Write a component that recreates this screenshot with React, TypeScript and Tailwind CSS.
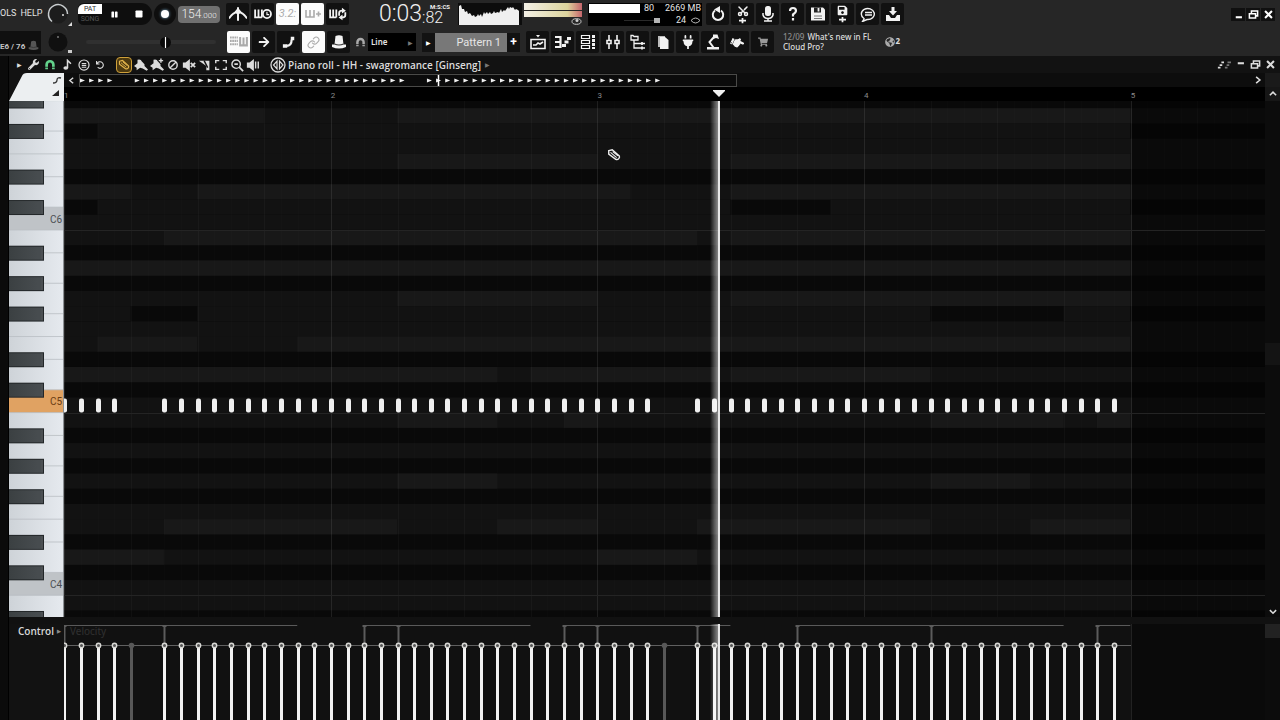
import { clsx } from 'clsx'
import type { FC, ReactNode } from 'react'
import {
  FaArrowRight,
  FaGlobeAmericas,
  FaHandPointRight,
  FaPause,
  FaPlug,
  FaSave,
  FaShoppingCart,
  FaStop,
  FaUndo,
  FaWrench,
} from 'react-icons/fa'
import { LuLink, LuScissors } from 'react-icons/lu'

const STEP = 16.66
const ROW = 15.22
const FIRST_ROW = -8
const STEPS = Array.from({ length: 64 }, (_, i) => i)
const ROWS = Array.from({ length: 35 }, (_, i) => i)
const SILENT = [4, 5, 36, 37]
const MUTED = [4, 36]
const HITS = STEPS.filter((i) => !SILENT.includes(i))
const PLAYHEAD = 655
const PATTERN_END = 1067

// the topmost visible key is G#
const NAMES = ['G#', 'G', 'F#', 'F', 'E', 'D#', 'D', 'C#', 'C', 'B', 'A#', 'A']
const nameOf = (row: number) => NAMES[row % 12]
const isBlack = (row: number) => nameOf(row).includes('#')
const topOf = (row: number) => FIRST_ROW + row * ROW
const xOf = (step: number) => Math.round(step * STEP + 0.3)

// [row, first step, last step, tone]
type Ghost = [number, number, number, 'light' | 'plain']
const GHOSTS: Ghost[] = [
  [1, 0, 12, 'light'],
  [1, 20, 64, 'light'],
  [2, 2, 64, 'plain'],
  [4, 20, 32, 'light'],
  [4, 40, 64, 'light'],
  [6, 0, 4, 'light'],
  [6, 8, 34, 'light'],
  [6, 40, 64, 'light'],
  [7, 2, 40, 'plain'],
  [7, 46, 64, 'plain'],
  [9, 6, 38, 'light'],
  [9, 40, 64, 'light'],
  [11, 0, 64, 'light'],
  [13, 20, 32, 'light'],
  [13, 40, 64, 'light'],
  [14, 0, 4, 'plain'],
  [14, 8, 52, 'plain'],
  [14, 60, 64, 'plain'],
  [16, 2, 8, 'light'],
  [16, 14, 64, 'light'],
  [18, 0, 26, 'light'],
  [18, 28, 39, 'light'],
  [18, 40, 52, 'light'],
  [21, 20, 26, 'light'],
  [21, 30, 32, 'light'],
  [21, 52, 60, 'light'],
  [21, 62, 64, 'light'],
  [25, 20, 26, 'light'],
  [25, 52, 58, 'light'],
  [28, 6, 20, 'light'],
  [28, 26, 32, 'light'],
  [28, 38, 52, 'light'],
  [28, 58, 64, 'light'],
  [30, 0, 6, 'light'],
  [30, 32, 38, 'light'],
]
const TONES = { light: '#181818', plain: '#121212' }

type IconProps = { children: ReactNode; size?: number }

const Icon: FC<IconProps> = ({ children, size = 16 }) => (
  <svg
    width={size}
    height={size}
    viewBox="0 0 16 16"
    fill="none"
    stroke="currentColor"
    strokeWidth="1.6"
    aria-hidden="true"
  >
    {children}
  </svg>
)

const Magnet: FC<{ size?: number }> = ({ size = 13 }) => (
  <Icon size={size}>
    <path d="M3.5 13.500V7.500a4.500 4.500 0 0 1 9 0v6" strokeWidth="3.600" />
    <path d="M1 11h5M10 11h5" stroke="#111" strokeWidth="1" />
  </Icon>
)

const Hat: FC<{ size?: number }> = ({ size = 16 }) => (
  <Icon size={size}>
    <path
      d="M4.500 2q3.500-1.500 7 0l1 8.500H15V13q-7 3-14 0v-2.500h2.500z"
      fill="currentColor"
      stroke="none"
    />
    <path d="M3.500 10q4.500 2 9 0" stroke="#333" strokeWidth="1.200" />
  </Icon>
)

const Speaker: FC<{ children?: ReactNode }> = ({ children }) => (
  <Icon size={14}>
    <path d="M1 5h3l5-4v14l-5-4H1z" fill="currentColor" stroke="none" />
    {children}
  </Icon>
)

const Brush: FC<{ children?: ReactNode }> = ({ children }) => (
  <Icon size={14}>
    <path
      d="M4 2q4-1 5 2l3 3 0 2 4 4-1.500 1.500L10 12l-3-1-4 3 0-3-3-2 4-3z"
      fill="currentColor"
      stroke="none"
    />
    {children}
  </Icon>
)

const Pencil: FC<{ size?: number }> = ({ size = 14 }) => (
  <Icon size={size}>
    <path d="M2 3l4-1 8 7c1 2-1 5-4 4L2 7z" />
    <path d="M4 5l7 6M6.500 4l6 5" strokeWidth="1.2" />
  </Icon>
)

const Restore: FC = () => (
  <Icon size={11}>
    <path d="M2 7h9v6H2zM5 6V3h9v7h-3" strokeWidth="2.200" />
  </Icon>
)

const Close: FC = () => (
  <Icon size={11}>
    <path d="M3 3l10 10M13 3L3 13" strokeWidth="3" />
  </Icon>
)

const Minimize: FC = () => (
  <Icon size={11}>
    <path d="M4 12h9" strokeWidth="3" />
  </Icon>
)

type ToolProps = { label: string; on?: boolean; dim?: boolean; children: ReactNode }

const Tool: FC<ToolProps> = ({ label, on, dim, children }) => (
  <button
    type="button"
    aria-label={label}
    className={clsx(
      'flex h-[22px] w-[23px] shrink-0 items-center justify-center rounded-xs',
      on ? 'bg-[#fcfcfc] text-[#aaaaaa]' : 'bg-[#111111]',
      !on && (dim ? 'text-[#9a9a9a]' : 'text-[#f2f2f2]'),
    )}
  >
    {children}
  </button>
)

const Knob: FC<{ label: string; bright?: boolean }> = ({ label, bright }) => (
  <button
    type="button"
    aria-label={label}
    className="flex h-7 w-8 shrink-0 items-center justify-center"
  >
    <svg width="28" height="26" viewBox="0 0 28 26" aria-hidden="true">
      <circle cx="12" cy="13" r="9.500" fill={bright ? '#1c1c1c' : '#101010'} />
      {bright ? (
        <>
          <path
            d="M6 20.500A9.500 9.500 0 1 1 21.500 13"
            fill="none"
            stroke="#c9cdcf"
            strokeWidth="1.500"
          />
          <circle cx="17" cy="14" r="1" fill="#ddd" />
          <path d="M26 21v4h-4z" fill="#ddd" />
        </>
      ) : (
        <>
          <circle cx="12" cy="8" r="1" fill="#777" />
          <path d="M22 21h4v3h-4z" fill="#ccc" />
        </>
      )}
    </svg>
  </button>
)

const Spectrum: FC = () => (
  <svg
    width="64"
    height="22"
    viewBox="0 0 64 22"
    className="shrink-0 bg-[#0c0c0c]"
    aria-hidden="true"
  >
    <path
      d="M1 22V3l2-1 1 4 2 0 1 3 2-1 1 3 2-1 2 3 2-1 1 2 2-1 1-2 1 2 2-2 1 3 2-5 1 2 2-2 1 2 2-2 1 2 2-1 1-2 1 2 3-1 1 1 2-4 1 3 2-2 1 1 3-4 1 2 1-2 2 1 1-1 2 3 1-1 2 1 1 1V22z"
      fill="#f0f0f0"
    />
  </svg>
)

const Meter: FC = () => (
  <div className="mx-[2px] flex h-[22px] w-[58px] shrink-0 flex-col gap-px">
    <div className="h-[7px] bg-linear-to-r from-[#f4f0e6] via-[#dcd49c] via-75% to-[#c4656c]" />
    <div className="h-[7px] bg-linear-to-r from-[#f4f0e6] via-[#dcd49c] via-75% to-[#c4656c]" />
    <div className="flex justify-end text-[#cccccc]">
      <svg width="11" height="7" viewBox="0 0 11 7" aria-hidden="true">
        <ellipse cx="5.500" cy="3.500" rx="4.500" ry="2.800" fill="none" stroke="currentColor" />
        <circle cx="6" cy="2.500" r="1.500" fill="currentColor" />
      </svg>
    </div>
  </div>
)

const SystemPanel: FC = () => (
  <div className="mx-1 flex h-[23px] w-[114px] shrink-0 flex-col justify-between bg-black px-px text-[9px] leading-[11px] text-[#e4e4e4]">
    <div className="flex items-center gap-1">
      <span className="h-[9px] w-[51px] bg-white" />
      <span>80</span>
      <span className="ml-auto">2669 MB</span>
    </div>
    <div className="flex items-center justify-end gap-1">
      <span className="mr-3 flex w-9 items-center">
        <span className="h-px flex-1 bg-[#2a2a2a]" />
        <span className="h-[5px] w-[6px] bg-[#b5b5b5]" />
      </span>
      <span>24</span>
      <svg width="11" height="7" viewBox="0 0 11 7" aria-hidden="true">
        <path d="M1 3.500q4.500-5 9 0-4.500 5-9 0z" fill="none" stroke="#bbb" />
      </svg>
    </div>
  </div>
)

const TransportRow: FC = () => (
  <div className="flex h-7 items-center">
    <nav className="flex w-11 shrink-0 gap-1 text-[9px] text-[#e2e2e2]">
      <button type="button">OLS</button>
      <button type="button">HELP</button>
    </nav>
    <Knob label="Main volume" bright />
    <div className="ml-[2px] flex h-[22px] w-[74px] shrink-0 items-center rounded-l-md rounded-r-xl bg-[#0e0e0e]">
      <div className="flex w-6 flex-col text-center text-[7px] leading-[10px]">
        <button type="button" className="rounded-tl-md bg-white text-[#333333]">
          PAT
        </button>
        <button type="button" className="text-[#555555]">
          SONG
        </button>
      </div>
      <button type="button" aria-label="Pause" className="ml-[9px]">
        <FaPause size={7} color="#fff" />
      </button>
      <button type="button" aria-label="Stop" className="ml-[17px]">
        <FaStop size={8} color="#fff" />
      </button>
    </div>
    <button
      type="button"
      aria-label="Record"
      className="mx-[2px] flex size-[22px] shrink-0 items-center justify-center rounded-full bg-[#0e0e0e]"
    >
      <span className="size-2 rounded-full bg-white shadow-[0_0_3px_#88bbdd]" />
    </button>
    <div className="mr-[6px] flex h-[17px] w-[42px] shrink-0 items-baseline justify-center rounded-sm bg-[#707070] text-xs leading-[17px] font-light text-[#efefef]">
      154<span className="text-[8px]">.000</span>
    </div>
    <div className="flex gap-[2px]">
      <Tool label="Metronome">
        <Icon size={18}>
          <path d="M0 12q3-5 8-6 5 1 8 6" />
          <path d="M8 2v12" strokeWidth="1.800" />
          <path d="M8 2.500L11 6 8 9 5 6z" fill="currentColor" stroke="none" />
        </Icon>
      </Tool>
      <Tool label="Wait for input">
        <Icon size={18}>
          <path d="M1 4v7h6M4 4v7M7 4v7" />
          <circle cx="11.500" cy="8" r="3.600" />
          <path d="M11.500 6v2.500h2" strokeWidth="1" />
        </Icon>
      </Tool>
      <Tool label="Countdown" on>
        <span className="text-[11px] italic">3.2:</span>
      </Tool>
      <Tool label="Overdub" on>
        <Icon>
          <path d="M1 4v7h8V4M5 4v7M11 8h5M13.500 5.500v5" />
        </Icon>
      </Tool>
      <Tool label="Loop recording">
        <Icon size={18}>
          <path d="M1 4v7h5.500M3.700 4v7M6.500 4v7" />
          <path d="M9 9.500V7q0-2 3-2M14.500 6.500V9q0 2-3 2" />
          <path
            d="M11.500 2.500L15 5l-3.500 2.500zM12 8.500L8.500 11l3.500 2.500z"
            fill="currentColor"
            stroke="none"
          />
        </Icon>
      </Tool>
    </div>
    <div className="flex w-[109px] shrink-0 justify-end pr-2 text-[#f1f1f1]">
      <span className="text-[23px] leading-7 font-light">0:03</span>
      <span className="flex flex-col pt-[3px]">
        <span className="pl-2 text-[6px] leading-[7px] font-bold">M:S:CS</span>
        <span className="text-base leading-4 font-light">:82</span>
      </span>
    </div>
    <Spectrum />
    <Meter />
    <SystemPanel />
    <div className="flex gap-[2px]">
      <Tool label="Undo">
        <Icon>
          <path d="M5 4.500a5.200 5.200 0 1 0 6 0" strokeWidth="2" />
          <path d="M10 0L4 3.500 10 7z" fill="currentColor" stroke="none" />
        </Icon>
      </Tool>
      <Tool label="Cut">
        <span className="flex flex-col items-center">
          <LuScissors size={12} className="-rotate-90" strokeWidth={3} />
          <Icon size={7}>
            <path d="M0 8h16M8 2v12" strokeWidth="4" />
          </Icon>
        </span>
      </Tool>
      <Tool label="Record audio">
        <Icon>
          <rect x="5" y="0" width="6" height="10" rx="2.500" fill="currentColor" stroke="none" />
          <path d="M3 7v2q1 3.500 5 3.500T13 9V7M8 12v3.500M4 15h8" strokeWidth="1.500" />
        </Icon>
      </Tool>
      <Tool label="Help">
        <Icon>
          <path d="M5 5q0-3 3-3t3 3q0 1.500-3 3.500v2M8 12v2.500" strokeWidth="2.200" />
        </Icon>
      </Tool>
      <Tool label="Save">
        <Icon>
          <path d="M1 1.500h12l2 2v11H1z" fill="currentColor" stroke="none" />
          <path d="M4 1.500h7v5H4z" fill="#222" stroke="none" />
          <path d="M8.500 2v3.500" stroke="#eee" strokeWidth="1.800" />
          <path d="M4 10h8M4 12.500h8" stroke="#777" strokeWidth="1" />
        </Icon>
      </Tool>
      <Tool label="Save new version">
        <span className="flex flex-col items-center">
          <FaSave size={11} />
          <Icon size={7}>
            <path d="M0 8h16M8 2v12" strokeWidth="4" />
          </Icon>
        </span>
      </Tool>
      <Tool label="Messages">
        <Icon>
          <path d="M4 13l-1.500 2.500L7 13.500a6.500 5.500 0 1 0-3-1z" strokeWidth="1.400" />
          <path d="M5 6.500h7M5 9h7" strokeWidth="1.300" />
        </Icon>
      </Tool>
      <Tool label="Export">
        <Icon>
          <path
            d="M6.500 1h3v4H12L8 9.500 4 5h2.500zM1 9h3l2 3h4l2-3h3v6H1z"
            fill="currentColor"
            stroke="none"
          />
        </Icon>
      </Tool>
    </div>
    <div className="mr-[5px] ml-auto flex gap-px text-white">
      {[
        { label: 'Minimize', icon: <Minimize /> },
        { label: 'Restore', icon: <Restore /> },
        { label: 'Close', icon: <Close /> },
      ].map(({ label, icon }) => (
        <button
          key={label}
          type="button"
          aria-label={label}
          className="flex h-[13px] w-[14px] items-center justify-center bg-[#101010]"
        >
          {icon}
        </button>
      ))}
    </div>
  </div>
)

const PatternRow: FC = () => (
  <div className="flex h-7 items-center">
    <div className="mr-[3px] flex h-[23px] w-[41px] shrink-0 items-end justify-between bg-[#101010] pr-[2px] pb-px text-[8px] leading-3 font-bold whitespace-nowrap text-[#c4c4c4]">
      E6 / 76
      <span className="mb-[2px] text-[#555555]">
        <Hat size={11} />
      </span>
    </div>
    <Knob label="Main pitch" />
    <input
      type="range"
      aria-label="Song position"
      defaultValue={62}
      className="mr-[11px] ml-[10px] h-1 w-[130px] shrink-0 appearance-none rounded bg-[#303030] [&::-webkit-slider-thumb]:h-[11px] [&::-webkit-slider-thumb]:w-[11px] [&::-webkit-slider-thumb]:appearance-none [&::-webkit-slider-thumb]:rounded-full [&::-webkit-slider-thumb]:bg-linear-to-r [&::-webkit-slider-thumb]:from-[#0a0a0a] [&::-webkit-slider-thumb]:from-40% [&::-webkit-slider-thumb]:via-white [&::-webkit-slider-thumb]:to-[#0a0a0a] [&::-webkit-slider-thumb]:to-60%"
    />
    <div className="flex gap-[2px]">
      <Tool label="Typing keyboard" on>
        <Icon size={18}>
          <path d="M0 4h7M0 7h7M0 10h7" strokeWidth="1.800" strokeDasharray="1.500 .5" />
          <path d="M9 3.500v7.500h6V3.500M12 4v7" strokeWidth="1.800" />
        </Icon>
      </Tool>
      <Tool label="Step forward">
        <FaArrowRight size={12} />
      </Tool>
      <Tool label="Slide">
        <Icon size={14}>
          <path d="M5 12.500q6 0 6-7" strokeWidth="2.500" />
          <path d="M1 10.500h5v4H1zM10 2h4v4h-4z" fill="currentColor" stroke="none" />
        </Icon>
      </Tool>
      <Tool label="Link controls" on>
        <LuLink size={13} />
      </Tool>
      <Tool label="Hints">
        <Hat />
      </Tool>
    </div>
    <div className="mr-[2px] ml-[5px] flex text-[#aaaaaa]">
      <Magnet size={11} />
    </div>
    <div className="flex h-[18px] w-12 shrink-0 items-center bg-black">
      <select
        aria-label="Snap"
        className="w-9 appearance-none bg-transparent px-[3px] font-['Noto_Sans',sans-serif] text-[8px] font-semibold text-[#e6e6e6]"
      >
        <option>Line</option>
      </select>
      <span className="pl-1 text-[6px] text-[#777777]">▶</span>
    </div>
    <div className="mx-[6px] flex h-[19px] w-[98px] shrink-0 items-center bg-[#121212] text-white">
      <button type="button" aria-label="Pattern menu" className="w-[13px] text-[6px]">
        ▶
      </button>
      <button
        type="button"
        className="h-full flex-1 bg-[#787878] pr-[6px] text-right text-[11px] leading-[19px] text-[#e6e6e6]"
      >
        Pattern 1
      </button>
      <button
        type="button"
        aria-label="Add pattern"
        className="w-[13px] text-xs leading-4 font-bold"
      >
        +
      </button>
    </div>
    <div className="flex gap-[2px]">
      <Tool label="Playlist">
        <Icon>
          <path d="M1 5.500h14v9H1zM3 11h3l2-2 2 1 3-2" />
          <path d="M6 1h4L8 3.500z" fill="currentColor" stroke="none" />
        </Icon>
      </Tool>
      <Tool label="Piano roll">
        <Icon>
          <path d="M0 3h6M0 8h6M0 13h6M5.500 2v12" strokeWidth="2.200" />
          <path d="M7 11.500h4M9.500 8h4M12 4.500h4" strokeWidth="3" />
        </Icon>
      </Tool>
      <Tool label="Channel rack">
        <Icon>
          <path
            d="M1.500 1.500h8v3h-8zM1.500 6.500h8v3h-8zM1.500 11.500h8v3h-8z"
            strokeWidth="1.200"
          />
          <path d="M13.500 1v14" strokeWidth="3" strokeDasharray="3 1" />
        </Icon>
      </Tool>
      <Tool label="Mixer">
        <Icon>
          <path
            d="M4 1v5M4 10v5M12 1v5M12 10v5M2 6.500h4v3H2zM10 6.500h4v3h-4z"
            strokeWidth="1.600"
          />
        </Icon>
      </Tool>
      <Tool label="Browser">
        <Icon>
          <path d="M1 1.500h2l1 1h4V6H1zM4 6v8h5M4 9.500h5" strokeWidth="1.300" />
          <path d="M9 9.500h6M9 14h6M12 8v3M12 12.500v3" strokeWidth="1.700" />
        </Icon>
      </Tool>
      <Tool label="Project files">
        <Icon>
          <path d="M3 2h7v11H3z" fill="#bbb" stroke="none" />
          <path d="M5 3h5l3.500 3v9H5z" fill="currentColor" stroke="none" />
        </Icon>
      </Tool>
      <Tool label="Plugins">
        <FaPlug size={14} />
      </Tool>
      <Tool label="Tools">
        <Icon>
          <path d="M9 3L4.500 8l4 5.500" strokeWidth="2" />
          <path
            d="M8 .5h4.500L14 5l-3-1-3 1zM2 13h12v2.500H2z"
            fill="currentColor"
            stroke="none"
          />
        </Icon>
      </Tool>
      <Tool label="Touch">
        <FaHandPointRight size={13} className="rotate-[25deg]" />
      </Tool>
      <Tool label="Shop" dim>
        <FaShoppingCart size={10} />
      </Tool>
    </div>
    <a
      href="#news"
      className="ml-1 flex h-6 w-[127px] shrink-0 items-center justify-between px-[5px] font-['Noto_Sans',sans-serif] text-[8px] leading-[10px] font-medium text-[#dddddd]"
    >
      <span className="flex flex-col">
        <span>
          <span className="pr-px text-[#8b8b8b]">12/09</span> What's new in FL
        </span>
        <span>Cloud Pro?</span>
      </span>
      <span className="flex items-start text-[8px] leading-none font-bold">
        <FaGlobeAmericas size={10} color="#aaa" />2
      </span>
    </a>
  </div>
)

const TitleBar: FC = () => (
  <div className="flex h-[17px] items-center text-[#dcdcdc]">
    <div className="flex w-[107px] shrink-0 items-center justify-between pr-3 pl-2">
      <button type="button" aria-label="Piano roll menu" className="text-[6px]">
        ▶
      </button>
      <button type="button" aria-label="Tools">
        <FaWrench size={11} />
      </button>
      <button type="button" aria-label="Snap" className="text-[#63d38c]">
        <Magnet size={12} />
      </button>
      <button type="button" aria-label="Stamp">
        <Icon size={11}>
          <path d="M8 13V2l5 5" strokeWidth="2.200" />
          <ellipse cx="5.500" cy="13" rx="3.500" ry="2.600" fill="currentColor" stroke="none" />
        </Icon>
      </button>
      <button type="button" aria-label="Target">
        <Icon size={12}>
          <circle cx="8" cy="8" r="6.700" />
          <path d="M5 6h6M5 8.500h6M5 11h6" strokeWidth="1.500" />
        </Icon>
      </button>
      <button type="button" aria-label="Undo">
        <FaUndo size={8} />
      </button>
    </div>
    <div className="flex items-center gap-[2px]">
      <button
        type="button"
        aria-label="Draw"
        className="flex size-4 items-center justify-center rounded-sm border border-[#d0a13a] bg-[#4d3a10] text-[#e4b54c]"
      >
        <Pencil size={12} />
      </button>
      <button type="button" aria-label="Paint">
        <Brush />
      </button>
      <button type="button" aria-label="Paint sequence">
        <Brush>
          <path d="M10 3h5M12.500 .5v5" />
        </Brush>
      </button>
      <button type="button" aria-label="Delete">
        <Icon size={14}>
          <circle cx="8" cy="8" r="4.800" />
          <path d="M4.500 11.500l7-7" />
        </Icon>
      </button>
      <button type="button" aria-label="Mute">
        <Speaker>
          <path d="M10 5.500l5 5M15 5.500l-5 5" strokeWidth="2" />
        </Speaker>
      </button>
      <button type="button" aria-label="Slice">
        <Icon size={14}>
          <path d="M1 3h12v11H9.500V9z" fill="currentColor" stroke="none" />
          <path d="M7 3l4 8" stroke="#111" />
        </Icon>
      </button>
      <button type="button" aria-label="Select">
        <Icon size={14}>
          <path d="M2 6V3h4M10 3h4v3M14 10v3h-4M6 13H2v-3" />
        </Icon>
      </button>
      <button type="button" aria-label="Zoom">
        <Icon size={14}>
          <circle cx="7" cy="7" r="4.800" />
          <path d="M10.500 10.500L15 15M5 7h4" strokeWidth="2" />
        </Icon>
      </button>
      <button type="button" aria-label="Playback">
        <Speaker>
          <path d="M11 4v8M14 4v8" />
        </Speaker>
      </button>
    </div>
    <div className="ml-[10px] flex items-center gap-[2px]">
      <Icon size={16}>
        <circle cx="8" cy="8" r="7" strokeWidth="1.300" />
        <path d="M7 4v8L3.500 8zM9.500 4v8L13 8z" strokeWidth="1.200" />
      </Icon>
      <h1 className="font-['Open_Sans','Noto_Sans',sans-serif] text-[10px] leading-4 font-semibold whitespace-nowrap">
        Piano roll - HH - swagromance [Ginseng]
      </h1>
      <span className="pl-[2px] text-[6px] text-[#777777]">▶</span>
    </div>
    <div className="mr-1 ml-auto flex items-center gap-1">
      <button type="button" aria-label="Layout">
        <Icon size={14}>
          <path d="M5 5h3M3 8h3M1 11h3" strokeWidth="2" />
          <path d="M12 5h4M11 8h3M9 11h3" stroke="#777" strokeWidth="2" />
        </Icon>
      </button>
      <button type="button" aria-label="Minimize piano roll" className="pb-2">
        <Minimize />
      </button>
      <button type="button" aria-label="Restore piano roll">
        <Restore />
      </button>
      <button type="button" aria-label="Close piano roll">
        <Close />
      </button>
    </div>
  </div>
)

const Overview: FC = () => (
  <div className="flex items-center bg-[#0d0d0d] text-[#dddddd]">
    <button type="button" aria-label="Scroll left" className="flex w-[15px] justify-center">
      <Icon size={9}>
        <path d="M11 3L5 8l6 5" strokeWidth="2.500" />
      </Icon>
    </button>
    <svg width="658" height="13" aria-hidden="true">
      <rect x=".5" y=".5" width="657" height="12" fill="#0b0b0b" stroke="#4a4a48" />
      {HITS.map((i) => {
        const x = 1 + i * 9.13
        return <path key={i} d={`M${x} 4.500l5 2-5 2z`} fill="#f2f2f2" />
      })}
      <path d="M359.500 1v11" stroke="#fff" strokeWidth="1.500" />
    </svg>
    <button
      type="button"
      aria-label="Scroll right"
      className="ml-auto flex w-[15px] justify-center"
    >
      <Icon size={10}>
        <path d="M5 3l6 5-6 5" strokeWidth="2.500" />
      </Icon>
    </button>
  </div>
)

const Ruler: FC = () => (
  <svg className="h-full w-full bg-black" aria-hidden="true">
    {[0, 1, 2, 3, 4].map((bar) => (
      <text key={bar} x={bar * 266.7} y="11" fontSize="8" fill="#8a8a8a">
        {bar + 1}
      </text>
    ))}
    <path d={`M${PLAYHEAD - 6} 3h12v1l-6 6-6-6z`} fill="#f0f0f0" />
  </svg>
)

const Keyboard: FC = () => (
  <svg className="h-full w-full bg-[#dde2e7]" role="img" aria-label="Keyboard">
    <defs>
      <linearGradient id="ivory">
        <stop offset="0" stopColor="#ced3d8" />
        <stop offset="1" stopColor="#e6eaef" />
      </linearGradient>
      <linearGradient id="ebony">
        <stop offset="0" stopColor="#3b4042" />
        <stop offset=".9" stopColor="#474c4f" />
      </linearGradient>
    </defs>
    <rect width="100%" height="100%" fill="url(#ivory)" />
    {ROWS.filter((row) => nameOf(row) === 'C').map((row, i) => (
      <g key={row}>
        <rect
          y={topOf(row) - ROW / 2}
          width="55"
          height={ROW * 1.5}
          fill={i === 1 ? '#e0a262' : '#bfc3c7'}
        />
        <text x="41" y={topOf(row) + 8} fontSize="10" fill={i === 1 ? '#6b3d14' : '#4b4f53'}>
          C{6 - i}
        </text>
      </g>
    ))}
    {ROWS.map((row) => (
      <g key={row}>
        {isBlack(row) && (
          <path d={`M34 ${topOf(row) + ROW / 2}h21`} stroke="#b9bec3" strokeWidth=".8" />
        )}
        {(nameOf(row) === 'F' || nameOf(row) === 'C') && (
          <path d={`M0 ${topOf(row + 1)}h55`} stroke="#b9bec3" strokeWidth=".8" />
        )}
        {isBlack(row) && (
          <>
            <rect y={topOf(row) + 0.5} width="35" height="15" fill="#222628" />
            <rect y={topOf(row) + 1.5} width="32" height="13" fill="url(#ebony)" />
            <path d={`M33 ${topOf(row) + 1.5}v13`} stroke="#767b7e" />
          </>
        )}
      </g>
    ))}
    <path d="M54.500 0v600" stroke="#8d9195" />
  </svg>
)

const Playhead: FC = () => (
  <>
    <rect x={PLAYHEAD - 9} width="8" height="100%" fill="url(#glow)" />
    <rect x={PLAYHEAD - 1} width="2" height="100%" fill="#e8e8e8" />
  </>
)

const NoteGrid: FC = () => (
  <svg className="absolute inset-0 h-full w-full" role="img" aria-label="Notes">
    <defs>
      <linearGradient id="glow">
        <stop offset="0" stopColor="#fff" stopOpacity="0" />
        <stop offset="1" stopColor="#fff" stopOpacity=".5" />
      </linearGradient>
    </defs>
    {ROWS.map((row) => (
      <rect
        key={row}
        y={topOf(row)}
        width="100%"
        height={ROW + 1}
        fill={isBlack(row) ? '#090909' : '#121212'}
      />
    ))}
    {GHOSTS.map(([row, from, to, tone]) => (
      <rect
        key={`${row}-${from}`}
        x={from * STEP}
        y={topOf(row)}
        width={(to - from) * STEP}
        height={ROW}
        fill={TONES[tone]}
      />
    ))}
    {Array.from({ length: 72 }, (_, i) => (
      <path
        key={i}
        d={`M${xOf(i) + 0.5} 0v600`}
        stroke="#fff"
        strokeOpacity={i % 16 === 0 ? 0.09 : i % 4 === 0 ? 0.03 : 0.01}
      />
    ))}
    <rect x={PATTERN_END + 1} width="100%" height="100%" fill="#000" fillOpacity=".4" />
    {ROWS.filter((row) => nameOf(row) === 'C').map((row) => (
      <path key={row} d={`M0 ${Math.round(topOf(row + 1)) + 0.5}h3000`} stroke="#242424" />
    ))}
    {HITS.map((i) => (
      <rect
        key={i}
        x={xOf(i) - 2}
        y={topOf(20) + 1}
        width="5"
        height="14"
        rx="2"
        fill="#f0f0f0"
      />
    ))}
    <Playhead />
  </svg>
)

const VELOCITY_SPANS = [
  [0, 14],
  [18, 28],
  [30, 40],
  [44, 60],
  [62, 64],
]
const VELOCITY_MARKS = [0, 6, 18, 20, 30, 32, 38, 44, 52, 62]

const VelocityLane: FC = () => (
  <div className="relative overflow-hidden bg-[#0a0a0a]">
    <svg className="absolute inset-0 h-full w-full" role="img" aria-label="Note velocities">
      <rect width={PATTERN_END} height="100%" fill="#fff" fillOpacity=".03" />
      {VELOCITY_SPANS.map(([from, to]) => (
        <path key={from} d={`M${from * STEP} 1.500H${to * STEP}`} stroke="#5a5a5a" />
      ))}
      {VELOCITY_MARKS.map((i) => (
        <path
          key={i}
          d={`M${xOf(i) - 1.5} 2h4M${xOf(i) + 0.5} 2v18`}
          stroke="#5c5c5c"
          strokeWidth="2"
        />
      ))}
      <path d={`M0 21.500H${PATTERN_END}`} stroke="#606060" />
      <path d={`M${PATTERN_END + 0.5} 0v200`} stroke="#222" />
      {MUTED.map((i) => (
        <g key={i} fill="#585858">
          <rect x={xOf(i) - 1} y="22" width="3" height="100%" />
          <circle cx={xOf(i) + 0.5} cy="21.500" r="2.800" />
        </g>
      ))}
      {HITS.map((i) => (
        <g key={i}>
          <rect x={xOf(i) - 1} y="24" width="3" height="100%" fill="#f4f4f4" />
          <circle
            cx={xOf(i) + 0.5}
            cy="21.500"
            r="2.200"
            fill="#555"
            stroke="#d8d8d4"
            strokeWidth="1.400"
          />
        </g>
      ))}
      <Playhead />
    </svg>
    <span className="block pl-[6px] font-['Noto_Sans',sans-serif] text-[10px] leading-[15px] text-[#2b2b2b]">
      Velocity
    </span>
  </div>
)

const PianoRoll: FC = () => (
  <section className="flex min-h-0 flex-1 bg-[#121212]">
    <div className="w-[9px] shrink-0 border-r border-black bg-[#0b0b0b]" />
    <div className="flex min-w-0 flex-1 flex-col">
      <TitleBar />
      <div className="grid min-h-0 flex-1 grid-cols-[55px_minmax(0,1fr)_15px] grid-rows-[14px_14px_minmax(0,1fr)_7px_96px]">
        <div className="row-span-2">
          <svg width="55" height="28" aria-hidden="true">
            <path d="M0 28L13 3q1-3 5-3h37v28z" fill="#eceff1" />
            <path d="M44 10q4 0 4-3t4-2" fill="none" stroke="#333" strokeWidth="1.300" />
            <path d="M50 17v6h-7z" fill="#222" />
          </svg>
        </div>
        <Overview />
        <div className="bg-[#1a1a1a]" />
        <Ruler />
        <button
          type="button"
          aria-label="Scroll up"
          className="flex items-center justify-center bg-[#161616] text-[#dddddd]"
        >
          <Icon size={10}>
            <path d="M3 10l5-5 5 5" strokeWidth="2.500" />
          </Icon>
        </button>
        <Keyboard />
        <div className="relative overflow-hidden">
          <NoteGrid />
          <span className="absolute top-[47px] left-[543px] text-[#eeeeee]">
            <Pencil size={14} />
          </span>
        </div>
        <div className="flex flex-col items-center justify-between bg-[#0c0c0c] text-[#dddddd]">
          <span />
          <span className="h-[22px] w-full bg-[#141414]" />
          <button type="button" aria-label="Scroll down">
            <Icon size={10}>
              <path d="M3 5l5 5 5-5" strokeWidth="2.500" />
            </Icon>
          </button>
        </div>
        <div className="col-span-3 bg-[#111111]" />
        <div className="flex items-start justify-end gap-[3px] bg-[#121212] pr-[3px] font-['Open_Sans','Noto_Sans',sans-serif] text-[10px] leading-[15px] font-semibold text-[#d8d8d8]">
          Control
          <span className="text-[5px] text-[#888888]">▶</span>
        </div>
        <VelocityLane />
        <div className="bg-[#0c0c0c]">
          <div className="h-[14px] bg-[#222222]" />
        </div>
      </div>
    </div>
  </section>
)

const App: FC = () => (
  <div className="flex h-screen flex-col overflow-hidden bg-[#121212] font-['Roboto','Noto_Sans',sans-serif]">
    <header className="h-14 shrink-0 bg-[#262626]">
      <TransportRow />
      <PatternRow />
    </header>
    <PianoRoll />
  </div>
)

export default App
